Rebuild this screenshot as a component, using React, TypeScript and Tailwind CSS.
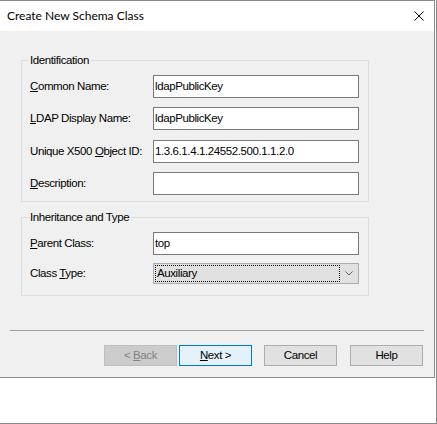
import React from "react";

const U = ({ children }: { children: React.ReactNode }) => (
  <span className="underline decoration-1 underline-offset-[1px]">{children}</span>
);

function Row({
  label,
  value,
  className = "",
}: {
  label: React.ReactNode;
  value: string;
  className?: string;
}) {
  return (
    <div className={"flex items-center h-[23px] " + className}>
      <div className="w-[131px] pl-[8px] text-black whitespace-nowrap">{label}</div>
      <div className="w-[206px] h-[23px] bg-white border border-[#7a7a7a] flex items-center pl-[1px] text-black whitespace-nowrap overflow-hidden">
        {value}
      </div>
    </div>
  );
}

function Group({
  title,
  className,
  children,
}: {
  title: string;
  className: string;
  children: React.ReactNode;
}) {
  return (
    <div className={"relative ml-[21px] w-[348px] border border-[#dcdcdc] " + className}>
      <span className="absolute left-[6px] -top-[7px] px-[2px] bg-[#f0f0f0] leading-[13px] text-black whitespace-nowrap">
        {title}
      </span>
      {children}
    </div>
  );
}

function Btn({
  children,
  variant = "normal",
  className = "",
}: {
  children: React.ReactNode;
  variant?: "normal" | "disabled" | "default";
  className?: string;
}) {
  const v =
    variant === "disabled"
      ? "bg-[#cccccc] border-[#bfbfbf] text-[#838383]"
      : variant === "default"
      ? "bg-[#e5f1fb] border-[#0078d7] text-black"
      : "bg-[#e1e1e1] border-[#adadad] text-black";
  return (
    <div
      className={
        "w-[73px] h-[21px] border flex items-center justify-center whitespace-pre " + v + " " + className
      }
    >
      {children}
    </div>
  );
}

export default function App() {
  return (
    <div
      className="w-[437px] h-[424px] bg-white border-r border-b border-[#8a8a8a] text-[11.5px] tracking-[-0.4px]"
      style={{ fontFamily: '"Liberation Sans", Arial, sans-serif' }}
    >
      <div className="w-[435px] h-[378px] border-t border-r border-b border-[#8a8a8a] flex flex-col bg-[#f0f0f0]">
        {/* Title bar */}
        <div className="h-[30px] bg-white flex items-center justify-between pl-[7px] pr-[10px]">
          <span
            className="text-[12px] tracking-normal text-black"
            style={{ fontFamily: 'Lato, "Noto Sans", sans-serif' }}
          >
            Create New Schema Class
          </span>
          <svg width="10" height="10" viewBox="0 0 10 10" className="block">
            <path d="M0.5 0.5 L9.5 9.5 M9.5 0.5 L0.5 9.5" stroke="#000" strokeWidth="1" fill="none" />
          </svg>
        </div>

        {/* Body */}
        <div className="flex-1 flex flex-col">
          <Group title="Identification" className="mt-[29px] pt-[14px] pb-[6px]">
            <Row label={<><U>C</U>ommon Name:</>} value="ldapPublicKey" />
            <Row className="mt-[9px]" label={<><U>L</U>DAP Display Name:</>} value="ldapPublicKey" />
            <Row className="mt-[10px]" label={<>Unique X500 <U>O</U>bject ID:</>} value="1.3.6.1.4.1.24552.500.1.1.2.0" />
            <Row className="mt-[9px]" label={<><U>D</U>escription:</>} value="" />
          </Group>

          <Group title="Inheritance and Type" className="mt-[15px] pt-[14px] pb-[11px]">
            <Row label={<><U>P</U>arent Class:</>} value="top" />
            <div className="flex items-center h-[21px] mt-[8px]">
              <div className="w-[131px] pl-[8px] text-black whitespace-nowrap">
                Class <U>T</U>ype:
              </div>
              <div className="w-[206px] h-[21px] bg-[#e1e1e1] border border-[#adadad] flex items-center">
                <div className="ml-[1px] w-[185px] h-[17px] border border-dotted border-black flex items-center pl-[1px] text-black">
                  Auxiliary
                </div>
                <div className="flex-1 flex items-center justify-center">
                  <svg width="8" height="5" viewBox="0 0 8 5" className="block">
                    <path d="M0.5 0.5 L4 4 L7.5 0.5" stroke="#606060" strokeWidth="1" fill="none" />
                  </svg>
                </div>
              </div>
            </div>
          </Group>

          <div className="ml-[10px] w-[414px] h-[1px] bg-[#a0a0a0] mt-[34px]" />

          <div className="flex mt-[14px] ml-[104px]">
            <Btn variant="disabled">
              {"< "}
              <U>B</U>
              {"ack"}
            </Btn>
            <Btn variant="default" className="ml-[2px]">
              <U>N</U>
              {"ext >"}
            </Btn>
            <Btn className="ml-[12px]">Cancel</Btn>
            <Btn className="ml-[13px]">Help</Btn>
          </div>
        </div>
      </div>
    </div>
  );
}
